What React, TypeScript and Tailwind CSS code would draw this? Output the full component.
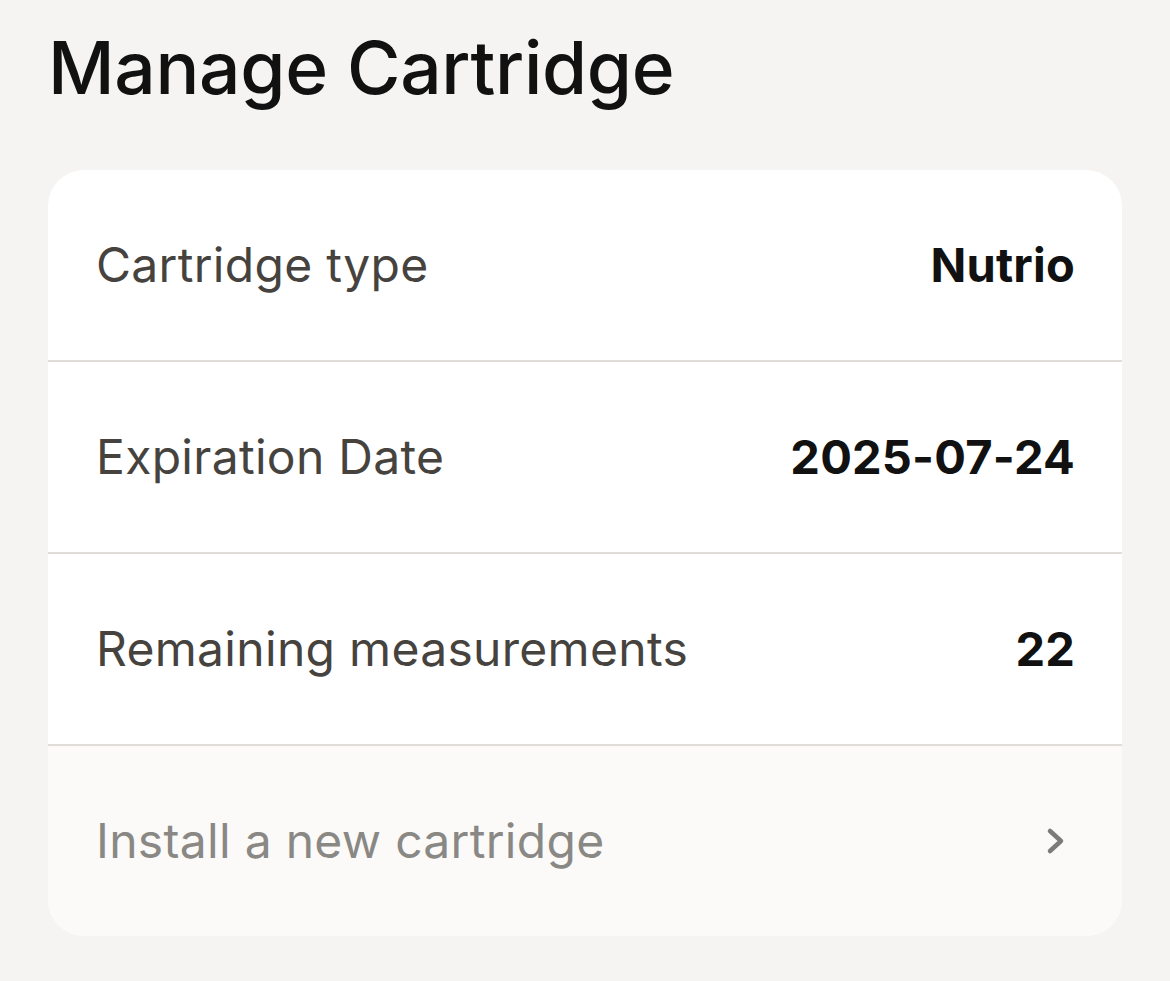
import React from "react";

const rows = [
  { label: "Cartridge type", value: "Nutrio" },
  { label: "Expiration Date", value: "2025-07-24" },
  { label: "Remaining measurements", value: "22" },
];

export default function App() {
  return (
    <div
      className="min-h-[981px] w-[1170px] bg-[#f5f4f2] px-[48px] pt-[22px]"
      style={{ fontFamily: "Inter, 'Liberation Sans', sans-serif" }}
    >
      <h1 className="text-[73px] leading-[92px] font-medium tracking-[-0.3px] text-[#111111]">
        Manage Cartridge
      </h1>
      <div className="mt-[56px] overflow-hidden rounded-[36px] bg-white">
        {rows.map((r) => (
          <div
            key={r.label}
            className="flex h-[192px] items-center justify-between border-b-2 border-[#e0ddd9] pl-[48px] pr-[47px]"
          >
            <span className="text-[48px] text-[#46433f] tracking-[0.3px]">{r.label}</span>
            <span className="text-[47px] font-bold text-[#111111] tracking-[0.2px]">{r.value}</span>
          </div>
        ))}
        <div className="flex h-[190px] items-center justify-between bg-[#fbfaf8] pl-[48px] pr-[47px]">
          <span className="text-[48px] text-[#8a8884] tracking-[0.3px]">Install a new cartridge</span>
          <svg width="22" height="30" viewBox="0 0 22 30" className="mr-[8px]">
            <path d="M5 5 L16 15 L5 25" fill="none" stroke="#7b7b7b" strokeWidth="4.5" strokeLinecap="round" strokeLinejoin="round" />
          </svg>
        </div>
      </div>
    </div>
  );
}
